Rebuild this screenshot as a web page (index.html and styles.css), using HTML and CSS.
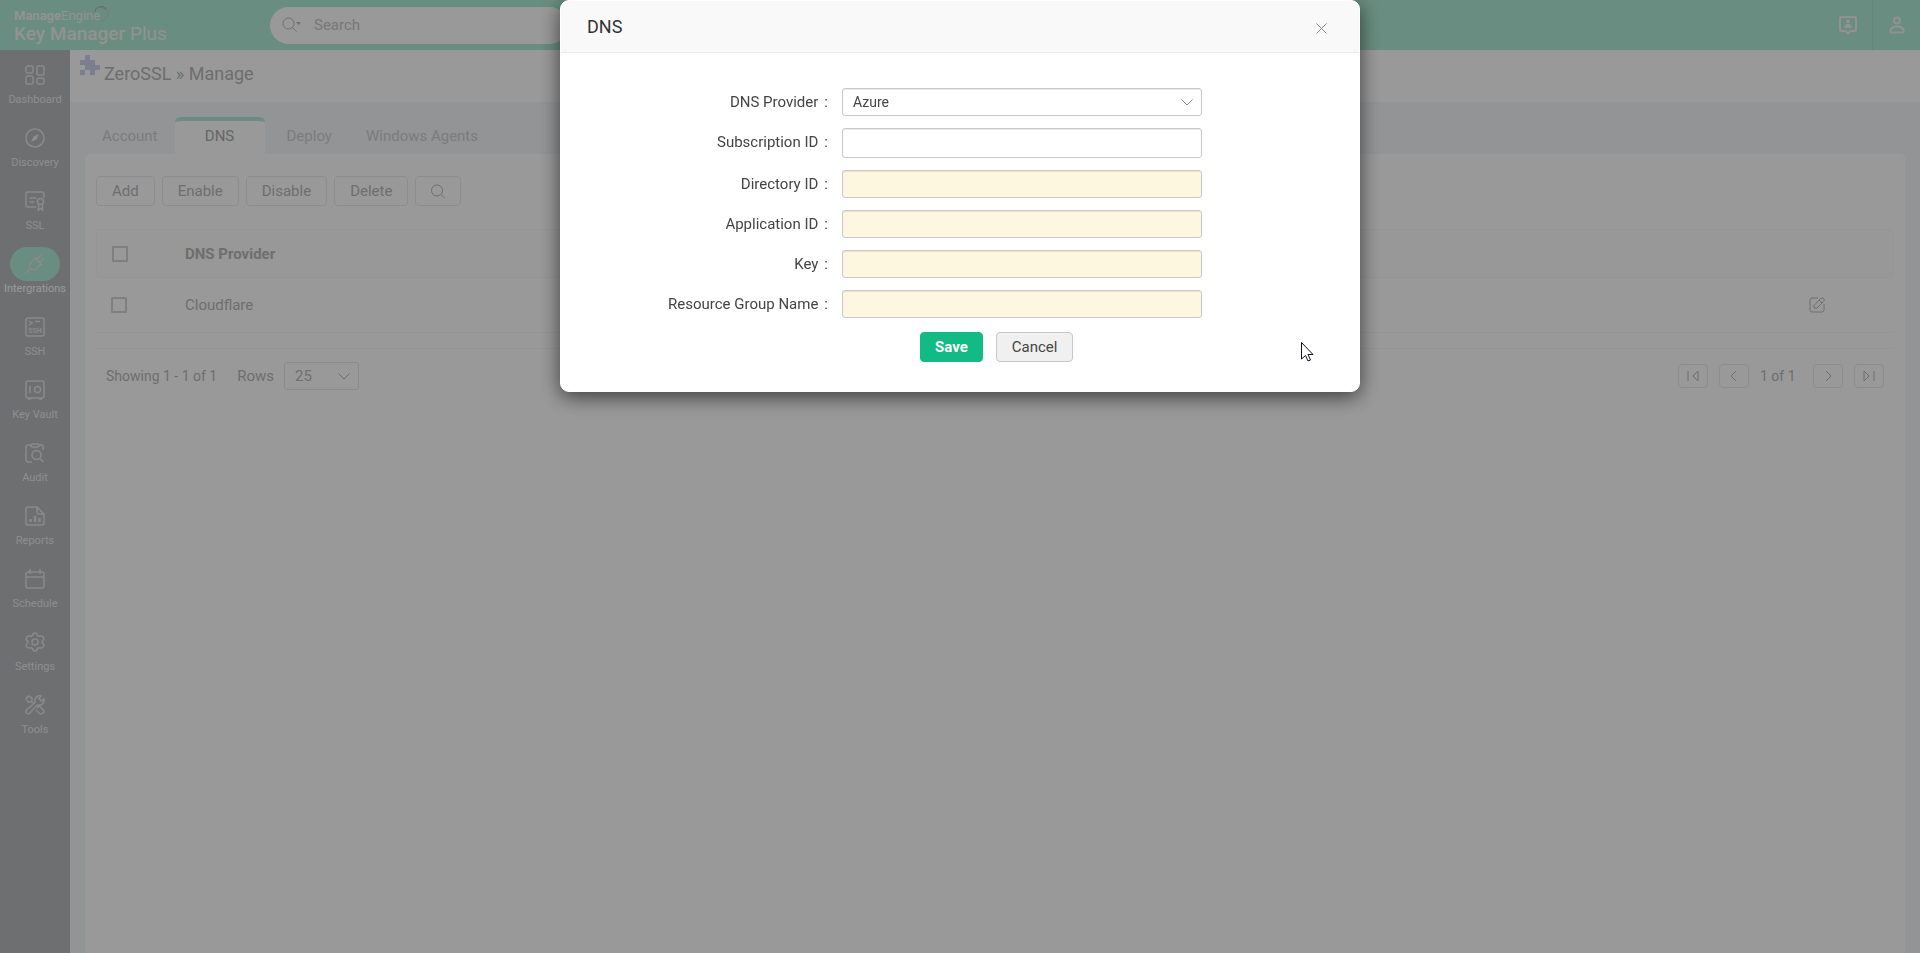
FILE: index.html
```
<!DOCTYPE html>
<html lang="en">
<head>
  <meta charset="UTF-8">
  <meta name="viewport" content="width=device-width, initial-scale=1.0">
  <title>Key Manager Plus</title>
  <link rel="stylesheet" href="styles.css">
</head>
<body>
  <header class="topbar">
    <a class="logo" href="#">
      <span class="logo-company"><b>Manage</b>Engine
        <svg class="logo-ring" width="16" height="18" viewBox="0 0 16 18">
          <path d="M1 7a6 6 0 0 1 11-3" stroke="#d9a5a5"/>
          <path d="M3 3a7 7 0 0 1 9 2" stroke="#9fc9d0"/>
          <path d="M11 2c5 4 4 11-3 14" stroke="#dcc9a0"/>
        </svg>
      </span>
      <span class="logo-product"><b>Key Manager</b> Plus</span>
    </a>
    <div class="search">
      <svg width="20" height="16" viewBox="0 0 20 16"><circle cx="6.5" cy="6.5" r="5.5"/><path d="M10.5 10.5l4 4"/><path class="solid" d="M14 5h5l-2.500 3z"/></svg>
      <input type="text" placeholder="Search" aria-label="Search">
    </div>
    <div class="topbar-actions">
      <button class="top-btn" aria-label="Contact">
        <svg width="18" height="19" viewBox="0 0 18 19"><path d="M2 1h14q1 0 1 1v12q0 1-1 1h-4.500l-2.500 2.500L6.500 15H2q-1 0-1-1V2q0-1 1-1z"/><circle class="solid" cx="9" cy="5.500" r="2"/><path class="solid" d="M5.500 12v-1.500q0-2.500 3.500-2.500t3.500 2.500V12z"/></svg>
      </button>
      <button class="top-btn" aria-label="Profile">
        <svg width="16" height="18" viewBox="0 0 16 18"><circle cx="8" cy="4.500" r="3"/><path d="M1.500 16V14q1-3.500 6.500-3.500t6.500 3.500v2q0 .5-.5.5H2q-.5 0-.5-.5z"/></svg>
      </button>
    </div>
  </header>

  <div class="layout">
    <nav class="sidebar">
      <a href="#"><span class="nav-icon"><svg viewBox="0 0 20 20"><rect x="1" y="1" width="7" height="7" rx="1.500"/><rect x="12" y="1" width="7" height="9" rx="1.500"/><rect x="1" y="11" width="7" height="8" rx="1.500"/><rect x="12" y="13" width="7" height="6" rx="1.500"/></svg></span>Dashboard</a>
      <a href="#"><span class="nav-icon"><svg viewBox="0 0 20 20"><circle cx="10" cy="10" r="9"/><path class="solid" d="M14 6l-2.500 5.500L6 14l2.500-5.500z"/></svg></span>Discovery</a>
      <a href="#"><span class="nav-icon"><svg viewBox="0 0 20 20"><path d="M11 16H3q-2 0-2-2V3q0-2 2-2h14q2 0 2 2v4M4.500 7h7M4.500 11h5"/><circle cx="15.500" cy="10.500" r="3"/><path d="M13.500 13v6l2-1.500 2 1.500v-6"/></svg></span>SSL</a>
      <a class="active" href="#"><span class="nav-icon"><svg viewBox="0 0 20 20"><path d="M1 19l4.500-4.500M11.500 5.500l4.500-4.500M14.500 8.500l4.500-4.500M9 3l8 8M10.500 4.500L6 8.500q-3 3-.5 6t6 0l4.500-4.500"/></svg></span>Intergrations</a>
      <a href="#"><span class="nav-icon"><svg viewBox="0 0 20 20"><rect x="1" y="1" width="18" height="18" rx="2"/><path d="M4 4l3 2-3 2M10 4.500h5"/><text class="tiny" x="10" y="16" text-anchor="middle">SSH</text></svg></span>SSH</a>
      <a href="#"><span class="nav-icon"><svg viewBox="0 0 20 20"><rect x="1" y="1" width="18" height="17" rx="2"/><path d="M5 6v7M3 19h3M14 19h3"/><circle cx="12.500" cy="9.500" r="3"/></svg></span>Key Vault</a>
      <a href="#"><span class="nav-icon"><svg viewBox="0 0 20 20"><path d="M7 19H3q-2 0-2-2V4q0-2 2-2h3M14 2h2q2 0 2 2v3"/><rect x="6" y="1" width="8" height="3" rx="1.500"/><circle cx="11.500" cy="12" r="4.500"/><path d="M15 15.500l3.500 3.500"/></svg></span>Audit</a>
      <a href="#"><span class="nav-icon"><svg viewBox="0 0 20 20"><path d="M12 1H3q-2 0-2 2v14q0 2 2 2h14q2 0 2-2V8zM12 1v5q0 2 2 2h5"/><path class="bars" d="M5.500 16v-3M10 16v-6M14.500 16v-4"/></svg></span>Reports</a>
      <a href="#"><span class="nav-icon"><svg viewBox="0 0 20 20"><rect x="1" y="3" width="18" height="16" rx="2"/><path d="M1 8h18M5 0v5M15 0v5"/></svg></span>Schedule</a>
      <a href="#"><span class="nav-icon"><svg viewBox="0 0 20 20"><path d="M7.500 3.500Q8 1 10 1t2.500 2.500q1 1.200 2.500.5 2.500-.5 3.500 1.500T17.500 9q-.8 1 0 2 2 1.500 1 3.500T15 16q-1.500-.7-2.500.5Q12 19 10 19t-2.500-2.500Q6.500 15.300 5 16q-2.500.5-3.500-1.500t1-3.500q.8-1 0-2-2-1.500-1-3.500T5 4q1.500.7 2.500-.5z"/><circle cx="10" cy="10" r="3"/></svg></span>Settings</a>
      <a href="#"><span class="nav-icon"><svg viewBox="0 0 20 20"><path d="M1 3.500L3.500 1 7 3v3L6 7H3zM6.500 6.500L9 9M12 13l2-2 4 3.500q2 2 0 3.500t-3.500.5L11 15M1.500 15L10 7.500Q9.500 3 12 1.500t4-.5L14 3.500 16.500 6 19 4q.5 3-1.500 5T12 10L5 18q-2 1.500-3.500 0t0-3z"/></svg></span>Tools</a>
    </nav>

    <main>
      <div class="page-title">
        <svg width="20" height="20" viewBox="0 0 20 20"><path d="M5 0h5v5h5v5h5v5h-5v5h-5v-5H5v-5H0V5h5zM0 15h5v5H0z"/></svg>
        <h1>ZeroSSL » Manage</h1>
      </div>

      <div class="tabs">
        <a href="#">Account</a>
        <a class="active" href="#">DNS</a>
        <a href="#">Deploy</a>
        <a href="#">Windows Agents</a>
      </div>

      <section class="panel">
        <div class="toolbar">
          <button>Add</button>
          <button>Enable</button>
          <button>Disable</button>
          <button>Delete</button>
          <button class="icon-only" aria-label="Search"><svg width="14" height="15" viewBox="0 0 14 15"><circle cx="6" cy="6.500" r="5.500"/><path d="M10 10.500l4 4"/></svg></button>
        </div>

        <table>
          <thead>
            <tr>
              <th class="col-check"><input type="checkbox" aria-label="Select all"></th>
              <th>DNS Provider</th>
              <th class="col-edit"></th>
            </tr>
          </thead>
          <tbody>
            <tr>
              <td class="col-check"><input type="checkbox" aria-label="Select Cloudflare"></td>
              <td>Cloudflare</td>
              <td class="col-edit"><button aria-label="Edit"><svg width="16" height="16" viewBox="0 0 16 16"><path d="M9 1H3Q1 1 1 3v10q0 2 2 2h10q2 0 2-2V7M5 11V8.500l6.500-7q1.500-1 3 0t0 3L8 11z M10 3l3 3"/></svg></button></td>
            </tr>
          </tbody>
        </table>

        <div class="table-footer">
          <span class="showing">Showing 1 - 1 of 1</span>
          <label for="rows">Rows</label>
          <span class="select-box rows-select">
            <select id="rows"><option>25</option></select>
            <svg width="12" height="7" viewBox="0 0 12 7"><path d="M.5.5L6 6l5.500-5.500"/></svg>
          </span>
          <div class="pager">
            <button aria-label="First page"><svg width="12" height="10" viewBox="0 0 12 10"><path d="M1 0v10M11 0v10L6 5z"/></svg></button>
            <button aria-label="Previous page"><svg width="12" height="10" viewBox="0 0 12 10"><path d="M8 0L3 5l5 5"/></svg></button>
            <span>1 of 1</span>
            <button aria-label="Next page"><svg width="12" height="10" viewBox="0 0 12 10"><path d="M4 0l5 5-5 5"/></svg></button>
            <button aria-label="Last page"><svg width="12" height="10" viewBox="0 0 12 10"><path d="M1 0v10l5-5zM11 0v10"/></svg></button>
          </div>
        </div>
      </section>
    </main>
  </div>

  <div class="overlay">
    <div class="modal" role="dialog" aria-labelledby="modal-title">
      <div class="modal-header">
        <h2 id="modal-title">DNS</h2>
        <button aria-label="Close"><svg width="11" height="11" viewBox="0 0 11 11"><path d="M.5.5l10 10M10.500.5l-10 10"/></svg></button>
      </div>
      <form>
        <div class="form-row">
          <label for="provider">DNS Provider</label>
          <span class="select-box">
            <select id="provider"><option>Azure</option></select>
            <svg width="12" height="7" viewBox="0 0 12 7"><path d="M.5.5L6 6l5.500-5.500"/></svg>
          </span>
        </div>
        <div class="form-row">
          <label for="subscription">Subscription ID</label>
          <input class="plain" type="text" id="subscription">
        </div>
        <div class="form-row">
          <label for="directory">Directory ID</label>
          <input type="text" id="directory">
        </div>
        <div class="form-row">
          <label for="application">Application ID</label>
          <input type="text" id="application">
        </div>
        <div class="form-row">
          <label for="key">Key</label>
          <input type="password" id="key">
        </div>
        <div class="form-row">
          <label for="resource-group">Resource Group Name</label>
          <input type="text" id="resource-group">
        </div>
        <div class="form-actions">
          <button class="save" type="button">Save</button>
          <button class="cancel" type="button">Cancel</button>
        </div>
      </form>
      <svg class="pointer" width="13" height="20" viewBox="0 0 13 20"><path d="M.5.500v16.500l4-3.500 2.500 5.500 2.500-1-2.500-5.500h5z"/></svg>
    </div>
  </div>
</body>
</html>
```
FILE: styles.css
```
* {
  box-sizing: border-box;
}
body {
  margin: 0;
  min-height: 100vh;
  display: flex;
  flex-direction: column;
  font-family: Roboto, "Liberation Sans", sans-serif;
  font-size: 15px;
  line-height: 20px;
  color: #b8b8b8;
  background: #fff;
}
button, input, select {
  font: inherit;
  color: inherit;
}
button {
  padding: 0;
  border: 0;
  background: none;
}
a {
  color: inherit;
  text-decoration: none;
}
svg {
  fill: none;
  stroke: currentColor;
}
svg .solid {
  fill: currentColor;
  stroke: none;
}

/* Top bar */
.topbar {
  display: flex;
  align-items: center;
  height: 50px;
  background: #afebd5;
  color: #f4f4f4;
}
.logo {
  width: 270px;
  padding: 2px 0 0 14px;
}
.logo span {
  display: block;
}
.logo-company {
  position: relative;
  font-size: 13px;
  line-height: 16px;
}
.logo-ring {
  position: absolute;
  left: 80px;
  top: -3px;
}
.logo-product {
  font-size: 19px;
  line-height: 20px;
}
.logo-product b {
  font-weight: 500;
}
.search {
  display: flex;
  align-items: center;
  gap: 12px;
  width: 298px;
  height: 37px;
  padding-left: 12px;
  border-radius: 19px;
  background: #fff;
  color: #bbb;
}
.search input {
  width: 220px;
  padding: 0;
  border: 0;
  background: none;
}
.search input::placeholder {
  color: #c8c8c8;
}
.topbar-actions {
  display: flex;
  margin-left: auto;
}
.top-btn {
  display: flex;
  align-items: center;
  justify-content: center;
  width: 48px;
  height: 50px;
}
.top-btn svg {
  stroke-width: 2;
}
.top-btn + .top-btn {
  border-left: 1px solid #a4dfc9;
}

/* Sidebar */
.layout {
  display: flex;
  flex: 1;
}
.sidebar {
  flex: none;
  width: 70px;
  padding-top: 8px;
  background: #b7babc;
  color: #ececec;
  font-size: 11px;
  line-height: 16px;
}
.sidebar a {
  display: flex;
  flex-direction: column;
  align-items: center;
  height: 63px;
}
.nav-icon {
  display: flex;
  align-items: center;
  justify-content: center;
  width: 50px;
  height: 34px;
  border-radius: 17px;
}
.nav-icon svg {
  width: 20px;
  height: 20px;
  stroke-width: 1.5;
  stroke: #e6e6e6;
}
.nav-icon .bars {
  stroke-width: 2.5;
}
.sidebar .tiny {
  font-size: 7px;
  font-weight: 700;
  fill: #e6e6e6;
  stroke: none;
}
.sidebar .active {
  color: #fff;
}
.active .nav-icon {
  background: #afebd5;
}

/* Page */
main {
  display: flex;
  flex: 1;
  flex-direction: column;
  background: #f4f7fa;
}
.page-title {
  display: flex;
  gap: 4px;
  height: 52px;
  padding: 5px 10px;
  background: #fff;
}
.page-title svg {
  fill: #ccd4f0;
  stroke: none;
}
h1 {
  margin: 8px 0 0;
  font-size: 18px;
  line-height: 22px;
  font-weight: 400;
}
.tabs {
  display: flex;
  padding: 15px 15px 0;
  color: #cdd0d0;
}
.tabs a {
  height: 37px;
  padding: 9px 17px 0;
}
.tabs .active {
  width: 90px;
  margin-right: 5px;
  padding: 5px 0 0;
  border-top: 4px solid #afebd5;
  border-radius: 6px 6px 0 0;
  background: #fff;
  color: #aaa;
  text-align: center;
}
.panel {
  flex: 1;
  margin: 0 15px;
  padding: 22px 11px 0;
  border-radius: 5px 5px 0 0;
  background: #fff;
}
.toolbar {
  display: flex;
  gap: 7px;
  margin-bottom: 23px;
}
.toolbar button {
  height: 30px;
  padding: 0 15px;
  border: 1px solid #ececec;
  border-radius: 4px;
}
.toolbar .icon-only {
  display: flex;
  align-items: center;
}
table {
  width: 100%;
  border-collapse: separate;
  border-spacing: 0;
}
th, td {
  padding: 0;
  text-align: left;
}
th {
  height: 49px;
  border: 1px solid #f8f8f8;
  border-width: 1px 0;
  background: #fdfdfd;
  font-weight: 700;
}
th:first-child {
  border-left-width: 1px;
  border-radius: 5px 0 0 5px;
}
th:last-child {
  border-right-width: 1px;
  border-radius: 0 5px 5px 0;
}
td {
  height: 55px;
  border-bottom: 1px solid #f8f8f8;
}
.col-check {
  width: 89px;
  padding-left: 15px;
}
.col-edit {
  width: 85px;
}
.col-edit button, .col-edit svg, input[type="checkbox"] {
  display: block;
}
input[type="checkbox"] {
  appearance: none;
  width: 16px;
  height: 16px;
  margin: 0;
  border: 2px solid #d4d4d4;
  border-radius: 1px;
}
.table-footer {
  display: flex;
  align-items: center;
  margin-top: 15px;
  padding: 13px 10px;
  border-top: 1px solid #f8f8f8;
}
.showing {
  margin-right: 20px;
  font-size: 14px;
}
.select-box {
  position: relative;
  display: block;
}
.select-box select {
  appearance: none;
  display: block;
  width: 100%;
  height: 28px;
  padding: 0 10px;
  border: 1px solid #e8e8e8;
  border-radius: 3px;
  background: none;
}
.select-box svg {
  position: absolute;
  right: 9px;
  top: 11px;
  pointer-events: none;
}
.rows-select {
  width: 75px;
  margin-left: 10px;
}
.pager {
  display: flex;
  align-items: center;
  gap: 11px;
  margin-left: auto;
}
.pager span {
  width: 42px;
  font-size: 14px;
}
.pager button {
  display: flex;
  align-items: center;
  justify-content: center;
  width: 30px;
  height: 24px;
  border: 1px solid #ececec;
  border-radius: 4px;
}

/* Modal */
.overlay {
  position: fixed;
  inset: 0;
  z-index: 10;
  background: rgba(0, 0, 0, 0.4);
}
.modal {
  position: relative;
  width: 800px;
  max-width: 100%;
  margin: 0 auto;
  border: 1px solid #fff;
  border-radius: 9px;
  background: #fff;
  box-shadow: 0 5px 20px rgba(0, 0, 0, 0.6);
  color: #444;
}
.modal-header {
  display: flex;
  align-items: center;
  justify-content: space-between;
  height: 52px;
  padding: 0 32px 0 26px;
  border-bottom: 1px solid #ebebeb;
  border-radius: 8px 8px 0 0;
  background: #f9f9f9;
}
.modal-header button {
  padding-top: 4px;
}
.modal-header svg, .modal .select-box svg {
  display: block;
  color: #888;
}
h2 {
  margin: 0;
  color: #333;
  font-size: 18px;
  font-weight: 400;
}
form {
  display: flex;
  flex-direction: column;
  gap: 12px;
  padding: 35px 0 29px;
}
.form-row {
  display: grid;
  grid-template-columns: 1fr 360px;
  gap: 14px;
  padding-right: 157px;
}
.form-row label {
  padding-top: 4px;
  text-align: right;
}
.form-row label::after {
  content: ":";
  margin-left: 6px;
}
.form-row input, .form-row select {
  width: 100%;
  height: 28px;
  padding: 0 10px;
  border: 1px solid #c8c8c8;
  border-radius: 3px;
  background: #fdf7e0;
  box-shadow: inset 0 1px 1px rgba(0, 0, 0, 0.08);
}
.form-row select {
  background: #fff;
  font-size: 14px;
}
.form-row .plain {
  height: 30px;
  background: #fff;
}
.form-actions {
  display: flex;
  gap: 13px;
  margin-top: 2px;
  padding-left: 359px;
}
.form-actions button {
  height: 30px;
  padding: 0 15px;
  border: 1px solid #c8c8c8;
  border-radius: 4px;
  background: #f0f0f0;
}
.form-actions .save {
  padding: 0 14px;
  border-color: #12bb83;
  background: #12bb83;
  color: #fff;
  font-weight: 700;
}
.pointer {
  position: absolute;
  right: 45px;
  top: 341px;
  fill: #fff;
  stroke: #112;
}
```
